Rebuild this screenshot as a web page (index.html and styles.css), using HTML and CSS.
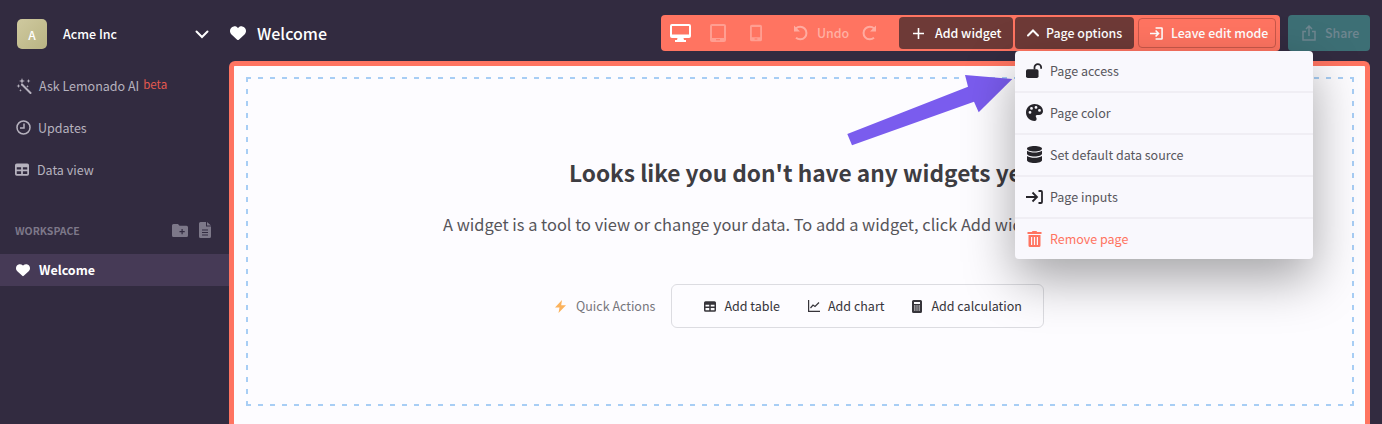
FILE: index.html
```html
<!DOCTYPE html>
<html lang="en">
<head>
    <meta charset="UTF-8">
    <meta name="viewport" content="width=device-width, initial-scale=1.0">
    <title>Welcome</title>
    <link rel="stylesheet" href="styles.css">
</head>
<body>
    <svg class="defs" width="0" height="0">
        <symbol id="heart" viewBox="0 0 512 512"><path fill="currentColor" d="M47.6 300.4L228.3 469.1c7.5 7 17.4 10.9 27.7 10.9s20.2-3.9 27.7-10.9L464.4 300.4c30.4-28.3 47.6-68 47.6-109.5v-5.8c0-69.9-50.5-129.5-119.4-141C347 36.5 300.6 51.4 268 84L256 96 244 84c-32.6-32.6-79-47.5-124.6-39.9C50.5 55.6 0 115.2 0 185.1v5.8c0 41.5 17.2 81.2 47.6 109.5z"/></symbol>
        <symbol id="table" viewBox="0 0 16 14"><path fill="currentColor" fill-rule="evenodd" d="M2 0h12a2 2 0 0 1 2 2v10a2 2 0 0 1-2 2H2a2 2 0 0 1-2-2V2a2 2 0 0 1 2-2zM2 4.500V7h5V4.500zM9 4.500V7h5V4.500zM2 9v3h5V9zM9 9v3h5V9z"/></symbol>
    </svg>

    <div class="app">
        <div class="sidebar">
            <div class="org">
                <div class="org-logo">A</div>
                <span class="org-name">Acme Inc</span>
                <svg class="org-chevron" width="14" height="9" viewBox="0 0 14 9"><path d="M1.500 1.500L7 7l5.500-5.500" fill="none" stroke="#fff" stroke-width="2" stroke-linecap="round"/></svg>
            </div>

            <div class="nav-item nav-ai">
                <svg width="16" height="16" viewBox="0 0 16 16"><path d="M6 6.500L14.500 15" stroke="currentColor" stroke-width="2" stroke-linecap="round"/><path fill="currentColor" d="M6 0l.8 2.200L9 3l-2.200.8L6 6l-.8-2.200L3 3l2.200-.8zM12.500 1l.6 1.400 1.400.6-1.400.6-.6 1.400-.6-1.400-1.400-.6 1.400-.6zM2.500 6l.6 1.400 1.400.6-1.400.6-.6 1.400-.6-1.400L.5 8l1.400-.6zM11.500 7l.4 1 1 .4-1 .4-.4 1-.4-1-1-.4 1-.4zM4.500 11l.4 1 1 .4-1 .4-.4 1-.4-1-1-.4 1-.4z"/></svg>
                <span>Ask Lemonado AI</span>
                <span class="beta">beta</span>
            </div>
            <div class="nav-item">
                <svg width="15" height="15" viewBox="0 0 15 15"><circle cx="7.500" cy="7.500" r="6.500" fill="none" stroke="currentColor" stroke-width="1.500"/><path d="M8 3.500V8H4" fill="none" stroke="currentColor" stroke-width="1.500"/></svg>
                <span>Updates</span>
            </div>
            <div class="nav-item nav-data">
                <svg width="14" height="13"><use href="#table"/></svg>
                <span>Data view</span>
            </div>

            <div class="workspace">
                <span>WORKSPACE</span>
                <svg class="folder-add" width="16" height="13" viewBox="0 0 16 13"><path fill="currentColor" fill-rule="evenodd" d="M1.500 0H6l1.500 1.800h7A1.500 1.500 0 0 1 16 3.300v8.200a1.500 1.500 0 0 1-1.500 1.500h-13A1.500 1.500 0 0 1 0 11.500v-10A1.500 1.500 0 0 1 1.500 0zM9.500 5v2h-2v1.200h2v2h1.200v-2h2V7h-2V5z"/></svg>
                <svg width="12" height="16" viewBox="0 0 12 16"><path fill="currentColor" fill-rule="evenodd" d="M1.500 0H7v4.500h5v10a1.500 1.500 0 0 1-1.500 1.500h-9A1.500 1.500 0 0 1 0 14.500v-13A1.500 1.500 0 0 1 1.500 0zM8 0l4 3.500H8zM3 7.500v1h6v-1zM3 10v1h6v-1zM3 12.500v1h6v-1z"/></svg>
            </div>
            <div class="page-link">
                <svg width="14" height="14"><use href="#heart"/></svg>
                <span>Welcome</span>
            </div>
        </div>

        <div class="main">
            <div class="topbar">
                <svg class="title-heart" width="16" height="16"><use href="#heart"/></svg>
                <span class="page-title">Welcome</span>

                <div class="toolbar">
                    <div class="devices">
                        <svg width="21" height="18" viewBox="0 0 21 18"><path fill="#fff" fill-rule="evenodd" d="M2 0h17a2 2 0 0 1 2 2v10a2 2 0 0 1-2 2h-5.500l.5 2h2v2H5v-2h2l.5-2H2a2 2 0 0 1-2-2V2a2 2 0 0 1 2-2zM2 2v8.500h17V2z"/></svg>
                        <svg class="faded" width="16" height="18" viewBox="0 0 16 18"><path fill="#fff" fill-rule="evenodd" d="M2 0h12a2 2 0 0 1 2 2v14a2 2 0 0 1-2 2H2a2 2 0 0 1-2-2V2a2 2 0 0 1 2-2zM2 2v12h12V2zM6 15.300v1h4v-1z"/></svg>
                        <svg class="faded phone" width="12" height="18" viewBox="0 0 13 18"><path fill="#fff" fill-rule="evenodd" d="M2 0h9a2 2 0 0 1 2 2v14a2 2 0 0 1-2 2H2a2 2 0 0 1-2-2V2a2 2 0 0 1 2-2zM2 2.500v11h9v-11zM5 15v1h3v-1z"/></svg>
                    </div>
                    <div class="history">
                        <svg width="16" height="16" viewBox="0 0 16 16"><path d="M2.800 3.500A6.300 6.300 0 1 1 3 12.800" fill="none" stroke="#fff" stroke-width="2"/><path fill="#fff" d="M1 .5v6h6z"/></svg>
                        <span>Undo</span>
                        <svg class="redo" width="16" height="16" viewBox="0 0 16 16"><path d="M13.200 3.500A6.300 6.300 0 1 0 13 12.800" fill="none" stroke="#fff" stroke-width="2"/><path fill="#fff" d="M15 .5v6H9z"/></svg>
                    </div>
                    <div class="tool-btn add-widget">
                        <svg width="11" height="11" viewBox="0 0 11 11"><path d="M5.500 0v11M0 5.500h11" stroke="#fff" stroke-width="1.600"/></svg>
                        <span>Add widget</span>
                    </div>
                    <div class="tool-btn page-options">
                        <svg width="12" height="8" viewBox="0 0 12 8"><path d="M1 6.500L6 1.500l5 5" fill="none" stroke="#fff" stroke-width="2" stroke-linecap="round"/></svg>
                        <span>Page options</span>
                    </div>
                    <div class="leave-btn">
                        <svg width="13" height="13" viewBox="0 0 14 14"><path d="M6 1h6.500a.5.5 0 0 1 .5.5v11a.5.5 0 0 1-.5.5H6" fill="none" stroke="#fff" stroke-width="1.700"/><path d="M0 7h8.500M6 3.800L9.200 7 6 10.200" fill="none" stroke="#fff" stroke-width="1.700"/></svg>
                        <span>Leave edit mode</span>
                    </div>
                </div>

                <div class="share-btn">
                    <svg width="14" height="16" viewBox="0 0 14 16"><path d="M4 6.500H1v8.500h12V6.500h-3M7 11V1.500M4 4l3-3 3 3" fill="none" stroke="currentColor" stroke-width="1.500"/></svg>
                    <span>Share</span>
                </div>
            </div>

            <div class="canvas">
                <div class="dropzone">
                    <h2>Looks like you don't have any widgets yet</h2>
                    <p>A widget is a tool to view or change your data. To add a widget, click Add widget in the toolbar.</p>
                    <div class="quick">
                        <svg class="bolt" width="11" height="13" viewBox="0 0 11 13"><path fill="#fbb25c" d="M7 0L0 7.500h4.500L3.500 13 11 5.300H6.200z"/></svg>
                        <span class="quick-label">Quick Actions</span>
                        <div class="quick-box">
                            <div class="quick-item">
                                <svg width="12" height="11"><use href="#table"/></svg>
                                <span>Add table</span>
                            </div>
                            <div class="quick-item">
                                <svg width="12" height="12" viewBox="0 0 12 12"><path d="M.6 0v11.400H12" fill="none" stroke="#36343a" stroke-width="1.200"/><path d="M2.500 8L5 5l2 1.500L11 2.500" fill="none" stroke="#36343a" stroke-width="1.200"/></svg>
                                <span>Add chart</span>
                            </div>
                            <div class="quick-item calc">
                                <svg width="10" height="13" viewBox="0 0 10 13"><path fill="#36343a" fill-rule="evenodd" d="M1.500 0h7A1.500 1.500 0 0 1 10 1.500v10A1.500 1.500 0 0 1 8.500 13h-7A1.500 1.500 0 0 1 0 11.500v-10A1.500 1.500 0 0 1 1.500 0zM2 2v2h6V2zM2 5.500v1h1.500v-1zM4.300 5.500v1h1.400v-1zM6.500 5.500v1H8v-1zM2 7.500v1h1.500v-1zM4.300 7.500v1h1.400v-1zM6.500 7.500v1H8v-1zM2 9.500v1h1.500v-1zM4.300 9.500v1h1.400v-1zM6.500 9.500v1H8v-1z"/></svg>
                                <span>Add calculation</span>
                            </div>
                        </div>
                    </div>
                </div>
            </div>
        </div>
    </div>

    <!-- annotation arrow drawn on top of the screenshot -->
    <svg class="arrow" width="180" height="80" viewBox="840 70 180 80"><path fill="#7a5cee" d="M847.300 134L968 86.700 965 75l47.300 4-33.600 33.300-4.700-10.600L852 145.300z"/></svg>

    <div class="menu">
        <div class="menu-row">
            <svg width="19" height="17" viewBox="0 0 19 17"><path fill="#26242a" d="M2 7h10a2 2 0 0 1 2 2v6a2 2 0 0 1-2 2H2a2 2 0 0 1-2-2V9a2 2 0 0 1 2-2z"/><path d="M9.500 7.500V5a3.700 3.700 0 0 1 7.400 0v1.500" fill="none" stroke="#26242a" stroke-width="2"/></svg>
            <span>Page access</span>
        </div>
        <div class="menu-row">
            <svg width="17" height="17" viewBox="0 0 17 17"><path fill="#26242a" fill-rule="evenodd" d="M8.500 0C13.200 0 17 3 17 7.300c0 2.400-2 3.700-4 3.700h-2c-1 0-1.500.8-1.200 1.600.4 1 .8 1.500.8 2.400 0 1.200-.8 2-2 2C3.800 17 0 13.200 0 8.500S3.800 0 8.500 0zM4 7a1.400 1.400 0 1 0 0 2.800A1.400 1.400 0 0 0 4 7zM5.500 3a1.400 1.400 0 1 0 0 2.800A1.400 1.400 0 0 0 5.500 3zM10 2a1.400 1.400 0 1 0 0 2.800A1.400 1.400 0 0 0 10 2zM13.500 5a1.400 1.400 0 1 0 0 2.800 1.400 1.400 0 0 0 0-2.800z"/></svg>
            <span>Page color</span>
        </div>
        <div class="menu-row">
            <svg width="15" height="17" viewBox="0 0 15 17"><path fill="#26242a" d="M7.500 0C11.600 0 15 1.100 15 2.700S11.600 5.400 7.500 5.400 0 4.300 0 2.700 3.400 0 7.500 0zM15 4.800v3c0 1.500-3.400 2.700-7.500 2.700S0 9.300 0 7.800v-3c1.700 1.200 4.500 1.800 7.500 1.800S13.300 6 15 4.800zM15 10v4.300c0 1.500-3.400 2.700-7.500 2.700S0 15.800 0 14.300V10c1.700 1.200 4.500 1.800 7.500 1.800S13.300 11.200 15 10z"/></svg>
            <span>Set default data source</span>
        </div>
        <div class="menu-row">
            <svg width="17" height="14" viewBox="0 0 17 14"><path d="M0 7h10M6.500 2.500L11 7l-4.500 4.500M12.500 1H15a1 1 0 0 1 1 1v10a1 1 0 0 1-1 1h-2.500" fill="none" stroke="#26242a" stroke-width="1.800"/></svg>
            <span>Page inputs</span>
        </div>
        <div class="menu-row remove">
            <svg width="14" height="16" viewBox="0 0 14 16"><path fill="#ff7461" fill-rule="evenodd" d="M5 0h4l.6 1H14v2H0V1h4.400zM1 4h12v10.500a1.500 1.500 0 0 1-1.500 1.500h-9A1.500 1.500 0 0 1 1 14.500zM3.500 6v8h1.200V6zM6.400 6v8h1.200V6zM9.300 6v8h1.200V6z"/></svg>
            <span>Remove page</span>
        </div>
    </div>
</body>
</html>
```

FILE: styles.css
```css
/* Basic body and layout */
body {
    margin: 0;
    height: 424px;
    overflow: hidden;
    font-family: 'Noto Sans CJK SC', 'Noto Sans', sans-serif;
    background-color: #322b40;
    color: #fff;
}

.defs {
    display: block;
}

.app {
    display: flex;
    height: 424px;
}

/* Sidebar */
.sidebar {
    width: 229px;
    flex-shrink: 0;
    color: #b6b2be;
    font-size: 12.500px;
}

.org {
    display: flex;
    align-items: center;
    height: 30px;
    padding: 19px 20px 0 17px;
    color: #fff;
}

.org-logo {
    width: 30px;
    height: 30px;
    border-radius: 5px;
    background: linear-gradient(135deg, #cfc99f, #b9b483);
    display: flex;
    align-items: center;
    justify-content: center;
    font-size: 12px;
    font-weight: 500;
}

.org-name {
    margin-left: 16px;
    padding-bottom: 2px;
    font-size: 12.500px;
    font-weight: 500;
    flex: 1;
}

.nav-item {
    display: flex;
    align-items: center;
    gap: 7px;
    height: 42px;
    padding: 0 0 1px 16px;
    box-sizing: border-box;
}

.nav-ai {
    margin-top: 16px;
}

.nav-data {
    gap: 8px;
    padding-left: 15px;
}

.beta {
    font-size: 11.500px;
    color: #e5594f;
    margin: -3px 0 0 -3px;
}

.workspace {
    display: flex;
    align-items: center;
    margin-top: 26px;
    padding: 0 18px 0 15px;
    height: 26px;
    font-size: 10.500px;
    font-weight: 700;
    color: #7d7889;
}

.workspace span {
    flex: 1;
}

.folder-add {
    margin-right: 11px;
}

.page-link {
    display: flex;
    align-items: center;
    gap: 9px;
    height: 32px;
    box-sizing: border-box;
    margin-top: 11px;
    padding: 0 0 1px 16px;
    background-color: #463a56;
    color: #fff;
    font-weight: 700;
}

/* Top bar */
.main {
    flex: 1;
    min-width: 0;
    display: flex;
    flex-direction: column;
}

.topbar {
    display: flex;
    align-items: center;
    height: 36px;
    padding: 15px 12px 10px 1px;
}

.title-heart {
    margin-right: 11px;
}

.page-title {
    font-size: 16px;
    font-weight: 500;
    flex: 1;
}

.toolbar {
    display: flex;
    align-items: center;
    flex-shrink: 0;
    width: 619px;
    box-sizing: border-box;
    height: 36px;
    background-color: #ff7461;
    border-radius: 4px;
    font-size: 12.400px;
    font-weight: 500;
}

.devices {
    display: flex;
    align-items: center;
    flex-shrink: 0;
    gap: 19px;
    padding-left: 9px;
}

.phone {
    margin-left: 5px;
}

.faded {
    opacity: .3;
}

.history {
    display: flex;
    align-items: center;
    flex-shrink: 0;
    gap: 8px;
    margin-left: 31px;
    width: 106px;
    color: #ffb0a3;
}

.history svg {
    opacity: .4;
}

.redo {
    margin-left: 4px;
}

.tool-btn {
    display: flex;
    align-items: center;
    flex-shrink: 0;
    height: 32px;
    box-sizing: border-box;
    border-radius: 4px;
    background-color: #6e3a37;
}

.add-widget {
    width: 114px;
    gap: 11px;
    padding-left: 14px;
}

.page-options {
    width: 119px;
    gap: 7px;
    margin-left: 2px;
    padding-left: 12px;
}

.leave-btn {
    display: flex;
    align-items: center;
    flex-shrink: 0;
    gap: 8px;
    width: 138px;
    height: 30px;
    box-sizing: border-box;
    margin-left: 4px;
    padding-left: 11px;
    border: 1px solid #c9584a;
    border-radius: 4px;
    white-space: nowrap;
}

.share-btn {
    display: flex;
    align-items: center;
    flex-shrink: 0;
    gap: 9px;
    width: 82px;
    height: 36px;
    box-sizing: border-box;
    margin-left: 8px;
    padding-left: 14px;
    background-color: #3d6f75;
    border-radius: 4px;
    color: #6f8690;
    font-size: 12.400px;
    font-weight: 500;
}

/* Canvas */
.canvas {
    flex: 1;
    min-height: 0;
    box-sizing: border-box;
    margin-right: 12px;
    padding: 11px 11px 0 12px;
    border: 5px solid #ff7461;
    border-bottom: none;
    border-radius: 6px 6px 0 0;
    background-color: #fdfcff;
}

/* 5px dash, 7px gap like the original, css dashed can't do that */
.dropzone {
    height: 329px;
    box-sizing: border-box;
    background:
        linear-gradient(90deg, #a8cef5 5px, transparent 5px) 0 0 / 12px 2px repeat-x,
        linear-gradient(90deg, #a8cef5 5px, transparent 5px) 0 100% / 12px 2px repeat-x,
        linear-gradient(#a8cef5 5px, transparent 5px) 0 0 / 2px 12px repeat-y,
        linear-gradient(#a8cef5 5px, transparent 5px) 100% 0 / 2px 12px repeat-y;
    color: #3e3d42;
    text-align: center;
    padding-top: 79px;
}

.dropzone h2 {
    margin: 0;
    font-size: 22.700px;
    line-height: 34px;
    font-weight: 600;
}

.dropzone p {
    margin: 22px 0 0;
    font-size: 16.400px;
    line-height: 24px;
    color: #56555a;
    white-space: nowrap;
}

.quick {
    display: flex;
    align-items: center;
    margin: 48px 0 0 309px;
    font-size: 12.500px;
    color: #3f3e44;
}

.bolt {
    margin-right: 10px;
}

.quick-label {
    color: #77767c;
    margin-right: 16px;
    padding-bottom: 2px;
}

.quick-box {
    display: flex;
    align-items: center;
    gap: 28px;
    width: 373px;
    height: 44px;
    box-sizing: border-box;
    padding-left: 32px;
    border: 1px solid #dcdce1;
    border-radius: 6px;
}

.quick-item {
    display: flex;
    align-items: center;
    gap: 8px;
    color: #36343a;
}

.quick-item span {
    padding-bottom: 2px;
}

.calc {
    gap: 9px;
}

/* Overlays */
.arrow {
    position: absolute;
    left: 840px;
    top: 70px;
}

.menu {
    position: absolute;
    left: 1015px;
    top: 51px;
    width: 298px;
    background-color: #f9f8fd;
    border-radius: 4px;
    box-shadow: 0 20px 50px rgba(0, 0, 0, .35);
    font-size: 12.500px;
    color: #57565c;
}

.menu-row {
    display: flex;
    align-items: center;
    height: 39px;
    padding: 0 0 1px 11px;
    gap: 7px;
    border-bottom: 2px solid #f0eef4;
}

.menu-row svg {
    width: 17px;
}

.remove {
    border-bottom: none;
    color: #ff7461;
}
```
